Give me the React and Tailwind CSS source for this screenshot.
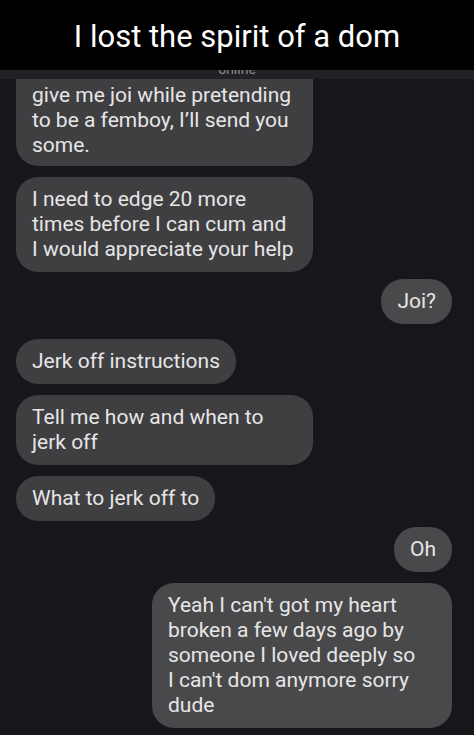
export default function App() {
  const left = "self-start bg-[#3f3f42] rounded-[22px] px-4 py-[10px] whitespace-nowrap";
  const right = "self-end bg-[#49494b] rounded-[22px] px-4 py-[10px] whitespace-nowrap";
  return (
    <div className="w-[474px] h-[735px] bg-[#16171b] overflow-hidden font-['Roboto',sans-serif]">
      <div className="h-[70px] bg-black flex items-center justify-center pt-1 text-white text-[31px]">
        I lost the spirit of a dom
      </div>
      <div className="h-[9px] bg-[#212226] overflow-hidden text-center">
        <div className="-mt-[9px] text-[14px] leading-[16px] text-[#8a8a8e]">online</div>
      </div>
      <div className="flex flex-col pl-4 pr-[22px] text-[21px] leading-[25px] text-[#e6e6e6]">
        <div className="self-start w-[297px] bg-[#3f3f42] rounded-b-[22px] px-4 pt-[4px] pb-[8px] whitespace-nowrap">
          give me joi while pretending
          <br />
          to be a femboy, I’ll send you
          <br />
          some.
        </div>
        <div className={left + " w-[297px] mt-[11px]"}>
          I need to edge 20 more
          <br />
          times before I can cum and
          <br />
          I would appreciate your help
        </div>
        <div className={right + " mt-[7px]"}>Joi?</div>
        <div className={left + " mt-[15px]"}>Jerk off instructions</div>
        <div className={left + " w-[297px] mt-[11px]"}>
          Tell me how and when to
          <br />
          jerk off
        </div>
        <div className={left + " mt-[11px]"}>What to jerk off to</div>
        <div className={right + " mt-[6px]"}>Oh</div>
        <div className={right + " w-[300px] mt-[11px]"}>
          Yeah I can't got my heart
          <br />
          broken a few days ago by
          <br />
          someone I loved deeply so
          <br />
          I can't dom anymore sorry
          <br />
          dude
        </div>
      </div>
    </div>
  );
}
